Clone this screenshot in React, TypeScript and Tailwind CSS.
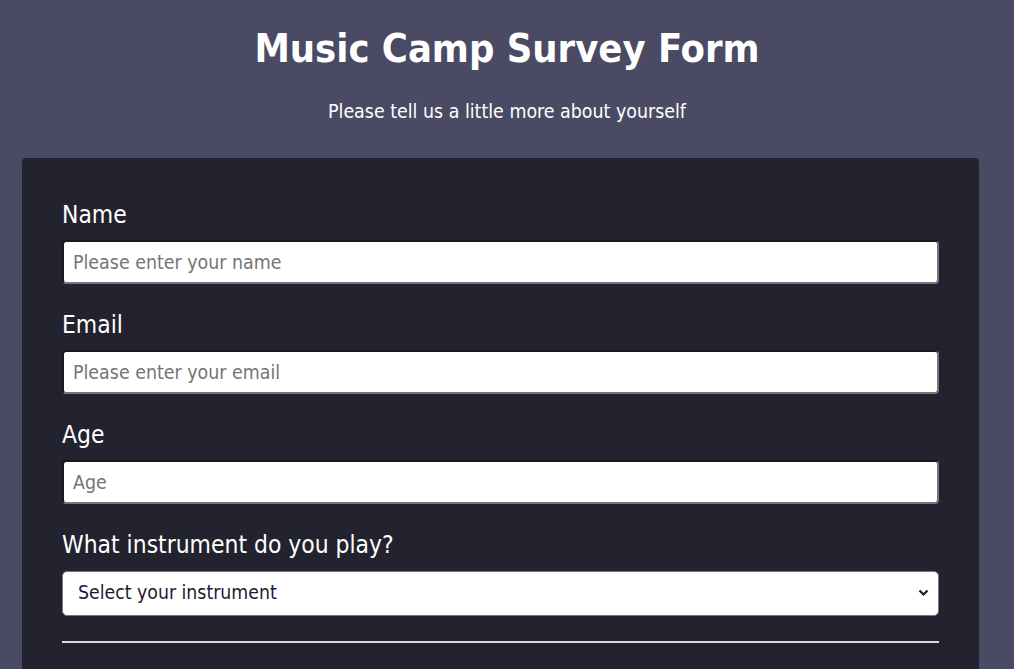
import React from "react";

const font = { fontFamily: '"DejaVu Sans Condensed", "DejaVu Sans", Verdana, sans-serif' };

function Field({ label, placeholder, type = "text" }: { label: string; placeholder: string; type?: string }) {
  return (
    <div className="mb-[27px]">
      <label className="block h-[28px] text-[24.4px] leading-[28px] text-white mb-[11px]">{label}</label>
      <input
        type={type}
        placeholder={placeholder}
        className="block w-full h-[44px] bg-white rounded-[4px] border-2 border-t-[#1a1a1a] border-l-[#1a1a1a] border-b-[#767676] border-r-[#767676] px-[9px] text-[19.4px] text-black placeholder:text-[#757575] outline-none"
      />
    </div>
  );
}

export default function App() {
  return (
    <div className="min-h-[669px] bg-[#4b4a65] text-white overflow-hidden" style={font}>
      <h1 className="pt-[24px] text-center text-[39.5px] leading-[48px] font-bold">Music Camp Survey Form</h1>
      <p className="mt-[28px] text-center text-[19.4px] leading-[24px]">Please tell us a little more about yourself</p>
      <div className="mx-[22px] mt-[34px] w-[957px] bg-[#23222f] rounded-[4px] px-[40px] pt-[43px] pb-[40px] h-[600px]">
        <Field label="Name" placeholder="Please enter your name" />
        <Field label="Email" placeholder="Please enter your email" type="email" />
        <Field label="Age" placeholder="Age" type="number" />
        <div>
          <label className="block h-[28px] text-[24.4px] leading-[28px] text-white mb-[12px]">What instrument do you play?</label>
          <div className="relative">
            <select className="block w-full h-[45px] bg-white rounded-[5px] border border-[#767676] pl-[15px] text-[19.3px] text-[#1b1b32] appearance-none outline-none">
              <option>Select your instrument</option>
              <option>Guitar</option>
              <option>Piano</option>
              <option>Drums</option>
            </select>
            <svg className="absolute right-[10px] top-[18px] pointer-events-none" width="11" height="8" viewBox="0 0 11 8">
              <path d="M1.5 1.5 L5.5 5.5 L9.5 1.5" stroke="#1b1b32" strokeWidth="2.2" fill="none" />
            </svg>
          </div>
        </div>
        <hr className="mt-[25px] border-0 h-[2px] bg-[#d9d9d9]" />
      </div>
    </div>
  );
}
